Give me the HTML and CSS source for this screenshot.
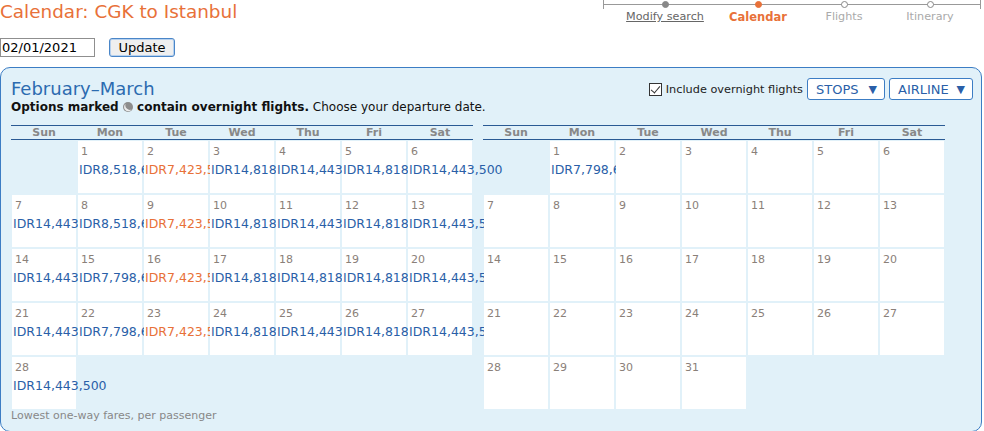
FILE: index.html
```html
<html>
	<head>
		<title>Calendar: CGK to Istanbul</title>
		<link rel="stylesheet" href="styles.css">
	</head>
	<body>
		<div class="top">
			<div>
				<h1 class="title">Calendar: CGK to Istanbul</h1>
				<div class="search">
					<input type="text" value="02/01/2021">
					<button>Update</button>
				</div>
			</div>
			<div class="steps">
				<div class="step step-done step-modify"><span class="dot"></span><a href="#">Modify search</a></div>
				<div class="step step-current step-calendar"><span class="dot"></span><span>Calendar</span></div>
				<div class="step step-flights"><span class="dot"></span><span>Flights</span></div>
				<div class="step step-itinerary"><span class="dot"></span><span>Itinerary</span></div>
			</div>
		</div>

		<div class="panel">
			<div class="panel-head">
				<h2>February&ndash;March</h2>
				<div class="filters">
					<label class="overnight"><input type="checkbox" checked>Include overnight flights</label>
					<button class="drop drop-stops">STOPS <span class="arrow">&#9660;</span></button>
					<button class="drop drop-airline">AIRLINE <span class="arrow">&#9660;</span></button>
				</div>
			</div>
			<p class="subtitle"><b>Options marked <svg class="moon" width="10" height="10" viewBox="0 0 10 10"><circle cx="5" cy="5" r="5" fill="#8d8d8d"/><path d="M2.6 1.8 A4.2 4.2 0 1 0 8.6 7.6 A4.6 4.6 0 0 1 2.6 1.8 Z" fill="#ececec"/></svg> contain overnight flights.</b> Choose your departure date.</p>

			<div class="months">
				<div class="month">
					<div class="dow"><span>Sun</span><span>Mon</span><span>Tue</span><span>Wed</span><span>Thu</span><span>Fri</span><span>Sat</span></div>
					<div class="days">
						<div class="blank"></div>
						<div class="day"><div class="num">1</div><div class="fare">IDR8,518,600</div></div>
						<div class="day"><div class="num">2</div><div class="fare fare-low">IDR7,423,500</div></div>
						<div class="day"><div class="num">3</div><div class="fare">IDR14,818,500</div></div>
						<div class="day"><div class="num">4</div><div class="fare">IDR14,443,500</div></div>
						<div class="day"><div class="num">5</div><div class="fare">IDR14,818,500</div></div>
						<div class="day"><div class="num">6</div><div class="fare">IDR14,443,500</div></div>

						<div class="day"><div class="num">7</div><div class="fare">IDR14,443,500</div></div>
						<div class="day"><div class="num">8</div><div class="fare">IDR8,518,600</div></div>
						<div class="day"><div class="num">9</div><div class="fare fare-low">IDR7,423,500</div></div>
						<div class="day"><div class="num">10</div><div class="fare">IDR14,818,500</div></div>
						<div class="day"><div class="num">11</div><div class="fare">IDR14,443,500</div></div>
						<div class="day"><div class="num">12</div><div class="fare">IDR14,818,500</div></div>
						<div class="day"><div class="num">13</div><div class="fare">IDR14,443,500</div></div>

						<div class="day"><div class="num">14</div><div class="fare">IDR14,443,500</div></div>
						<div class="day"><div class="num">15</div><div class="fare">IDR7,798,600</div></div>
						<div class="day"><div class="num">16</div><div class="fare fare-low">IDR7,423,500</div></div>
						<div class="day"><div class="num">17</div><div class="fare">IDR14,818,500</div></div>
						<div class="day"><div class="num">18</div><div class="fare">IDR14,818,500</div></div>
						<div class="day"><div class="num">19</div><div class="fare">IDR14,818,500</div></div>
						<div class="day"><div class="num">20</div><div class="fare">IDR14,443,500</div></div>

						<div class="day"><div class="num">21</div><div class="fare">IDR14,443,500</div></div>
						<div class="day"><div class="num">22</div><div class="fare">IDR7,798,600</div></div>
						<div class="day"><div class="num">23</div><div class="fare fare-low">IDR7,423,500</div></div>
						<div class="day"><div class="num">24</div><div class="fare">IDR14,818,500</div></div>
						<div class="day"><div class="num">25</div><div class="fare">IDR14,443,500</div></div>
						<div class="day"><div class="num">26</div><div class="fare">IDR14,818,500</div></div>
						<div class="day"><div class="num">27</div><div class="fare">IDR14,443,500</div></div>

						<div class="day"><div class="num">28</div><div class="fare">IDR14,443,500</div></div>
					</div>
				</div>

				<div class="month">
					<div class="dow"><span>Sun</span><span>Mon</span><span>Tue</span><span>Wed</span><span>Thu</span><span>Fri</span><span>Sat</span></div>
					<div class="days">
						<div class="blank"></div>
						<div class="day"><div class="num">1</div><div class="fare">IDR7,798,600</div></div>
						<div class="day"><div class="num">2</div></div>
						<div class="day"><div class="num">3</div></div>
						<div class="day"><div class="num">4</div></div>
						<div class="day"><div class="num">5</div></div>
						<div class="day"><div class="num">6</div></div>

						<div class="day"><div class="num">7</div></div>
						<div class="day"><div class="num">8</div></div>
						<div class="day"><div class="num">9</div></div>
						<div class="day"><div class="num">10</div></div>
						<div class="day"><div class="num">11</div></div>
						<div class="day"><div class="num">12</div></div>
						<div class="day"><div class="num">13</div></div>

						<div class="day"><div class="num">14</div></div>
						<div class="day"><div class="num">15</div></div>
						<div class="day"><div class="num">16</div></div>
						<div class="day"><div class="num">17</div></div>
						<div class="day"><div class="num">18</div></div>
						<div class="day"><div class="num">19</div></div>
						<div class="day"><div class="num">20</div></div>

						<div class="day"><div class="num">21</div></div>
						<div class="day"><div class="num">22</div></div>
						<div class="day"><div class="num">23</div></div>
						<div class="day"><div class="num">24</div></div>
						<div class="day"><div class="num">25</div></div>
						<div class="day"><div class="num">26</div></div>
						<div class="day"><div class="num">27</div></div>

						<div class="day"><div class="num">28</div></div>
						<div class="day"><div class="num">29</div></div>
						<div class="day"><div class="num">30</div></div>
						<div class="day"><div class="num">31</div></div>
					</div>
				</div>
			</div>

			<p class="note">Lowest one-way fares, per passenger</p>
		</div>
	</body>
</html>
```

FILE: styles.css
```css
body {
	margin: 0;
	font-family: "DejaVu Sans", Verdana, sans-serif;
	color: #222;
}

.top {
	display: flex;
	justify-content: space-between;
	align-items: flex-start;
}

.title {
	margin: 1px 0 0;
	font-size: 18.4px;
	line-height: 22px;
	font-weight: normal;
	color: #e87139;
}

.search {
	display: flex;
	gap: 14px;
	margin-top: 15px;
}

.search input {
	width: 95px;
	height: 19px;
	box-sizing: border-box;
	margin: 0;
	padding: 0 1px;
	border: 1px solid #8f8f8f;
	font-family: "DejaVu Sans", Verdana, sans-serif;
	font-size: 13px;
	color: #000;
}

.search button {
	width: 66px;
	height: 19px;
	margin: 0;
	padding: 0;
	border: 1px solid #4a86c8;
	border-radius: 3px;
	box-shadow: inset 0 0 0 1px #b7d1ee;
	background: #efefef;
	font-family: "DejaVu Sans", Verdana, sans-serif;
	font-size: 13px;
	color: #000;
}

/* progress bar */
.steps {
	display: flex;
	box-sizing: border-box;
	width: 378px;
	margin-right: 3px;
	padding-left: 10px;
	background:
		linear-gradient(#999, #999) 0 4px / 100% 1px no-repeat,
		linear-gradient(#999, #999) 0 0 / 1px 9px no-repeat,
		linear-gradient(#999, #999) 100% 0 / 1px 9px no-repeat;
}

.step {
	display: flex;
	flex-direction: column;
	align-items: center;
	font-size: 11.2px;
	line-height: 14px;
	color: #aaa;
}

.step .dot {
	width: 7px;
	height: 7px;
	box-sizing: border-box;
	margin: 1px 0 2px;
	border: 1px solid #888;
	border-radius: 50%;
	background: #fff;
}

.step-done .dot {
	background: #888;
}

.step-done a {
	color: #666;
}

.step-current {
	color: #e87139;
	font-weight: bold;
	font-size: 11.5px;
}

.step-current .dot {
	background: #e87139;
	border-color: #e87139;
}

.step-modify { width: 104px; }
.step-calendar { width: 82px; }
.step-flights { width: 90px; }
.step-itinerary { width: 82px; }

/* calendar panel */
.panel {
	margin: 10px 2px 0 0;
	padding: 10px 8px 9px 10px;
	border: 1px solid #3c7dc4;
	border-radius: 10px;
	background: #e1f1f9;
}

.panel-head {
	display: flex;
	justify-content: space-between;
	align-items: center;
	height: 22px;
}

.panel-head h2 {
	margin: 0;
	font-size: 18px;
	line-height: 22px;
	font-weight: normal;
	color: #2c6bb0;
}

.filters {
	display: flex;
	align-items: center;
	gap: 4px;
}

.overnight {
	display: flex;
	align-items: center;
	font-size: 11.3px;
	color: #222;
}

.overnight input {
	appearance: none;
	position: relative;
	width: 13px;
	height: 13px;
	margin: 0 4px 0 0;
	border: 1px solid #333;
	background: #fff;
}

.overnight input:checked::after {
	content: "";
	position: absolute;
	left: 3px;
	top: 0px;
	width: 4px;
	height: 8px;
	border-right: 1.5px solid #333;
	border-bottom: 1.5px solid #333;
	transform: rotate(40deg);
}

.drop {
	display: flex;
	align-items: center;
	justify-content: space-between;
	height: 22px;
	margin: 0;
	padding: 0 7px 0 8px;
	border: 1px solid #3c7dc4;
	border-radius: 3px;
	background: #fff;
	font-family: "DejaVu Sans", Verdana, sans-serif;
	font-size: 13px;
	color: #2a5fa8;
}

.drop .arrow {
	font-size: 11px;
}

.drop-stops { width: 78px; }
.drop-airline { width: 84px; }

.subtitle {
	margin: 0;
	font-size: 12px;
	line-height: 15px;
	color: #111;
}

.moon {
	vertical-align: -1px;
}

.months {
	display: flex;
	gap: 10px;
	margin-top: 10px;
}

.month {
	width: 462px;
}

.dow {
	display: grid;
	grid-template-columns: repeat(7, 64px);
	gap: 2px;
	padding: 0 1px;
	border-top: 1px solid #2a5a94;
	border-bottom: 1px solid #2a5a94;
	font-size: 11px;
	line-height: 13px;
	font-weight: bold;
	text-align: center;
	color: #888;
}

.days {
	display: grid;
	grid-template-columns: repeat(7, 64px);
	grid-auto-rows: 52px;
	gap: 2px;
	margin-top: 1px;
	padding: 0 1px;
}

.day {
	padding: 4px 1px 0;
	background: #fff;
	white-space: nowrap;
}

.num {
	padding-left: 2px;
	font-size: 11px;
	line-height: 13px;
	color: #8a8079;
}

.fare {
	margin-top: 4px;
	font-size: 12.5px;
	line-height: 15px;
	color: #2a5fa8;
}

.fare-low {
	color: #e87139;
}

.note {
	margin: 1px 0 0;
	font-size: 11px;
	line-height: 12px;
	color: #888;
}
```
